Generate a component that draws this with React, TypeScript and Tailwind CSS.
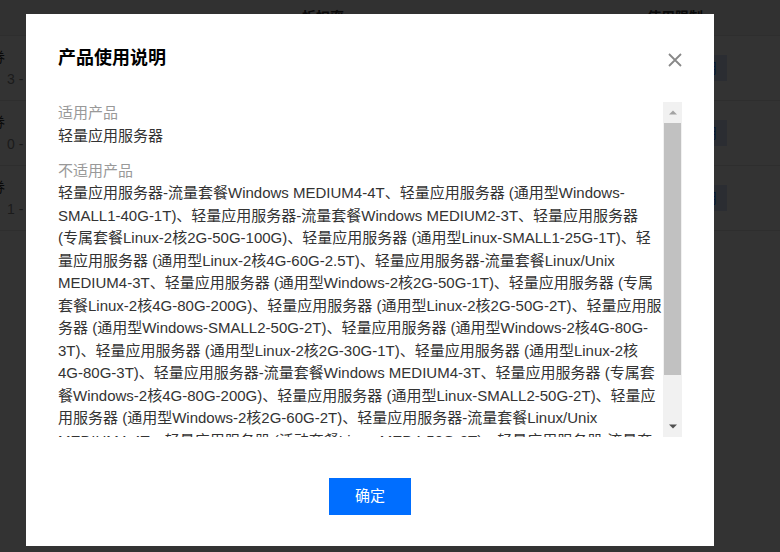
import React from 'react';

const lines = [
  '轻量应用服务器-流量套餐Windows MEDIUM4-4T、轻量应用服务器 (通用型Windows-',
  'SMALL1-40G-1T)、轻量应用服务器-流量套餐Windows MEDIUM2-3T、轻量应用服务器',
  '(专属套餐Linux-2核2G-50G-100G)、轻量应用服务器 (通用型Linux-SMALL1-25G-1T)、轻',
  '量应用服务器 (通用型Linux-2核4G-60G-2.5T)、轻量应用服务器-流量套餐Linux/Unix',
  'MEDIUM4-3T、轻量应用服务器 (通用型Windows-2核2G-50G-1T)、轻量应用服务器 (专属',
  '套餐Linux-2核4G-80G-200G)、轻量应用服务器 (通用型Linux-2核2G-50G-2T)、轻量应用服',
  '务器 (通用型Windows-SMALL2-50G-2T)、轻量应用服务器 (通用型Windows-2核4G-80G-',
  '3T)、轻量应用服务器 (通用型Linux-2核2G-30G-1T)、轻量应用服务器 (通用型Linux-2核',
  '4G-80G-3T)、轻量应用服务器-流量套餐Windows MEDIUM4-3T、轻量应用服务器 (专属套',
  '餐Windows-2核4G-80G-200G)、轻量应用服务器 (通用型Linux-SMALL2-50G-2T)、轻量应',
  '用服务器 (通用型Windows-2核2G-60G-2T)、轻量应用服务器-流量套餐Linux/Unix',
  'MEDIUM4-4T、轻量应用服务器 (活动套餐Linux-MED4-50G-2T)、轻量应用服务器-流量套',
  '餐Windows MEDIUM2-3T、轻量应用服务器 (通用型Linux-2核4G-80G-3T)',
];

const rows = [
  { name: '代金券', sub: '：3 - 12 个月可用' },
  { name: '代金券', sub: '：0 - 1 个月可用' },
  { name: '代金券', sub: '：1 - 3 个月可用' },
];

function CouponTable() {
  return (
    <div className="w-full text-[14px] text-[#333]">
      <div className="flex h-[36px] items-center border-b border-[#e5e5e5] bg-[#f3f3f3] font-bold">
        <div className="w-[278px]" />
        <div className="w-[90px] text-center">折扣率</div>
        <div className="flex-1" />
        <div className="w-[150px] pr-[60px] text-center">使用限制</div>
      </div>
      {rows.map((r, i) => (
        <div key={i} className="flex h-[65px] items-center border-b border-[#e5e5e5]">
          <div className="-ml-[37px] w-[300px] whitespace-nowrap">
            <div className="leading-[22px]">{r.name}</div>
            <div className="pl-[30px] leading-[22px] text-[#888]">{r.sub}</div>
          </div>
          <div className="flex-1" />
          <div className="mr-[53px] flex h-[26px] w-[48px] items-center justify-center bg-[#d5e2f7] text-[#006eff]">
            使用
          </div>
        </div>
      ))}
    </div>
  );
}

function FakeScrollbar() {
  return (
    <div className="flex w-[19px] flex-col items-center bg-[#f1f1f1]">
      <div className="flex h-[21px] w-full items-center justify-center">
        <svg width="8" height="5" viewBox="0 0 8 5">
          <path d="M0 4.5 L4 0.5 L8 4.5 Z" fill="#a3a3a3" />
        </svg>
      </div>
      <div className="h-[252px] w-[17px] bg-[#c1c1c1]" />
      <div className="flex-1" />
      <div className="flex h-[21px] w-full items-center justify-center">
        <svg width="8" height="5" viewBox="0 0 8 5">
          <path d="M0 0.5 L4 4.5 L8 0.5 Z" fill="#505050" />
        </svg>
      </div>
    </div>
  );
}

export default function App() {
  return (
    <div className="relative h-[552px] w-[780px] overflow-hidden bg-white font-['Liberation_Sans','Noto_Sans_CJK_SC',sans-serif]">
      <CouponTable />
      <div className="absolute inset-0 bg-black/80" />
      <div className="absolute left-[26px] top-[14px] flex h-[532px] w-[688px] flex-col bg-white px-[32px] pb-[31px] pt-[31px]">
        <div className="flex h-[26px] items-center justify-between">
          <h2 className="text-[18px] font-bold leading-[26px] text-black">产品使用说明</h2>
          <button className="relative top-[2px] flex h-[14px] w-[14px] items-center justify-center">
            <svg width="14" height="14" viewBox="0 0 14 14">
              <path d="M1 1 L13 13 M13 1 L1 13" stroke="#888" strokeWidth="1.8" />
            </svg>
          </button>
        </div>
        <div className="mt-[31px] flex h-[335px] overflow-hidden">
          <div className="flex-1 overflow-hidden text-[15px] leading-[22.5px]">
            <div className="text-[#999]">适用产品</div>
            <div className="text-[#333]">轻量应用服务器</div>
            <div className="mt-[12.5px] text-[#999]">不适用产品</div>
            <div className="text-[#333]">
              {lines.map((l, i) => (
                <div key={i} className="whitespace-nowrap">
                  {l}
                </div>
              ))}
            </div>
          </div>
          <FakeScrollbar />
        </div>
        <div className="mt-[41px] flex justify-center">
          <button className="h-[37px] w-[82px] bg-[#006eff] text-[15px] text-white">确定</button>
        </div>
      </div>
    </div>
  );
}
